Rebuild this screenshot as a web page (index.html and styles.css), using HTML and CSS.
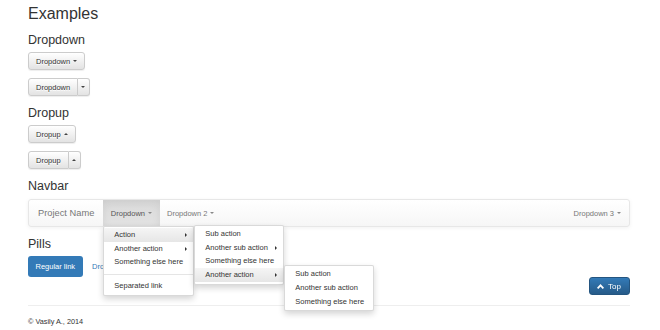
FILE: index.html
```html
<!DOCTYPE html>
<html lang="en">
<head>
    <meta charset="UTF-8">
    <meta name="viewport" content="width=device-width, initial-scale=1.0">
    <title>Examples</title>
    <link rel="stylesheet" href="styles.css">
</head>
<body>
    <div class="page">
        <h1>Examples</h1>

        <h3>Dropdown</h3>
        <div class="btn-row">
            <button class="btn">Dropdown <span class="caret"></span></button>
        </div>
        <div class="btn-row">
            <div class="btn-group">
                <button class="btn">Dropdown</button>
                <button class="btn btn-toggle"><span class="caret"></span></button>
            </div>
        </div>

        <h3>Dropup</h3>
        <div class="btn-row">
            <button class="btn">Dropup <span class="caret up"></span></button>
        </div>
        <div class="btn-row">
            <div class="btn-group">
                <button class="btn">Dropup</button>
                <button class="btn btn-toggle"><span class="caret up"></span></button>
            </div>
        </div>

        <h3 class="navbar-title">Navbar</h3>
        <nav class="navbar">
            <a class="brand" href="#">Project Name</a>
            <ul class="nav">
                <li class="dropdown open">
                    <a href="#" class="active">Dropdown <span class="caret"></span></a>
                    <ul class="dropdown-menu">
                        <li class="submenu hover">
                            <a href="#">Action <span class="arrow"></span></a>
                            <ul class="dropdown-menu sub">
                                <li><a href="#">Sub action</a></li>
                                <li><a href="#">Another sub action <span class="arrow"></span></a></li>
                                <li><a href="#">Something else here</a></li>
                                <li class="submenu hover">
                                    <a href="#">Another action <span class="arrow"></span></a>
                                    <ul class="dropdown-menu sub">
                                        <li><a href="#">Sub action</a></li>
                                        <li><a href="#">Another sub action</a></li>
                                        <li><a href="#">Something else here</a></li>
                                    </ul>
                                </li>
                            </ul>
                        </li>
                        <li><a href="#">Another action <span class="arrow"></span></a></li>
                        <li><a href="#">Something else here</a></li>
                        <li class="divider"></li>
                        <li><a href="#">Separated link</a></li>
                    </ul>
                </li>
                <li><a href="#">Dropdown 2 <span class="caret"></span></a></li>
            </ul>
            <ul class="nav nav-right">
                <li><a href="#">Dropdown 3 <span class="caret"></span></a></li>
            </ul>
        </nav>

        <h3 class="pills-title">Pills</h3>
        <ul class="pills">
            <li><a href="#" class="active">Regular link</a></li>
            <li><a href="#">Dropdown <span class="caret"></span></a></li>
        </ul>

        <hr>
        <footer>&copy; Vasily A., 2014</footer>
    </div>

    <a href="#" class="top-btn">
        <svg width="7" height="5" viewBox="0 0 7 5"><path d="M0.6 4.4 L3.5 1.4 L6.4 4.4" fill="none" stroke="#fff" stroke-width="1.8"/></svg>
        Top
    </a>
</body>
</html>
```

FILE: styles.css
```css
body { margin: 0; font-family: "Liberation Sans", Arial, sans-serif; font-size: 7.5px; color: #333; background: #fff; }
a { text-decoration: none; }
ul { list-style: none; margin: 0; padding: 0; }

.page { width: 602px; padding: 5px 0 0 28px; }
h1 { font-size: 16px; line-height: 18px; font-weight: normal; margin: 0; }
h3 { font-size: 12.5px; line-height: 14px; font-weight: normal; margin: 10px 0 5px; }
.navbar-title { margin-bottom: 6px; }

.btn-row { height: 18px; }
.btn-row + .btn-row { margin-top: 8px; }
.btn { display: inline-flex; align-items: center; gap: 3px; height: 18px; padding: 0 7px; font-family: inherit; font-size: 7.5px; color: #333; border: 1px solid #ccc; border-radius: 3px; background: linear-gradient(#fff, #e3e3e3); text-shadow: 0 1px 0 #fff; box-shadow: 0 1px 1px rgba(0,0,0,0.07); cursor: pointer; }
.btn-group { display: inline-flex; }
.btn-group .btn:first-child { border-radius: 3px 0 0 3px; }
.btn-group .btn-toggle { border-left: 0; border-radius: 0 3px 3px 0; padding: 0 4px 0 3px; width: 12px; justify-content: center; }

.caret { display: inline-block; width: 0; height: 0; border-top: 2px solid #444; border-left: 2px solid transparent; border-right: 2px solid transparent; }
.caret.up { border-top: 0; border-bottom: 2px solid #444; }

.navbar { display: flex; height: 26px; border: 1px solid #e7e7e7; border-radius: 3px; background: linear-gradient(#fff, #f6f6f6); box-shadow: 0 1px 4px rgba(0,0,0,0.06); margin-bottom: 10px; }
.brand { display: flex; align-items: center; padding: 0 9px; font-size: 9.3px; color: #777; }
.nav { display: flex; }
.nav > li { position: relative; }
.nav > li > a { display: flex; align-items: center; gap: 3px; height: 100%; padding: 0 7.5px; color: #777; }
.nav > li > a .caret { border-top-color: #888; }
.nav > li > a.active { color: #555; background: linear-gradient(#dbdbdb, #e2e2e2); box-shadow: inset 0 3px 8px rgba(0,0,0,0.07); }
.nav-right { margin-left: auto; }
.nav-right > li > a { padding-right: 8px; }

.dropdown-menu { position: absolute; top: 100%; left: 0; z-index: 10; width: 89px; padding: 1px 0 2px; background: #fff; border: 1px solid rgba(0,0,0,0.15); border-radius: 2px; box-shadow: 0 3px 6px rgba(0,0,0,0.17); }
.dropdown-menu li { position: relative; }
.dropdown-menu li > a { display: flex; align-items: center; justify-content: space-between; line-height: 13.7px; padding: 0 6px 0 10px; color: #333; white-space: nowrap; }
.dropdown-menu li.hover > a { background: linear-gradient(#f5f5f5, #e6e6e6); }
.dropdown-menu .divider { height: 1px; margin: 4.5px 0; background: #e5e5e5; }
.dropdown-menu.sub { top: -3px; left: 100%; margin-left: 1px; width: 88px; }
.arrow { width: 0; height: 0; border-left: 2px solid #333; border-top: 2px solid transparent; border-bottom: 2px solid transparent; }

.pills-title { margin-top: 0; }
.pills { display: flex; gap: 2px; height: 21px; }
.pills a { display: flex; align-items: center; gap: 3px; height: 21px; padding: 0 7.5px; border-radius: 3px; color: #337ab7; }
.pills a .caret { border-top-color: #337ab7; }
.pills a.active { color: #fff; background: #337ab7; }

hr { margin: 28px 0 0; border: 0; border-top: 1px solid #eee; }
footer { margin-top: 11px; line-height: 10px; font-size: 7.3px; }

.top-btn { position: fixed; right: 30px; bottom: 35px; display: flex; align-items: center; gap: 4px; height: 18px; padding: 0 8px 0 7px; box-sizing: border-box; font-size: 8px; color: #fff; border: 1px solid #245580; border-radius: 3px; background: linear-gradient(#337ab7, #265a88); }
```
